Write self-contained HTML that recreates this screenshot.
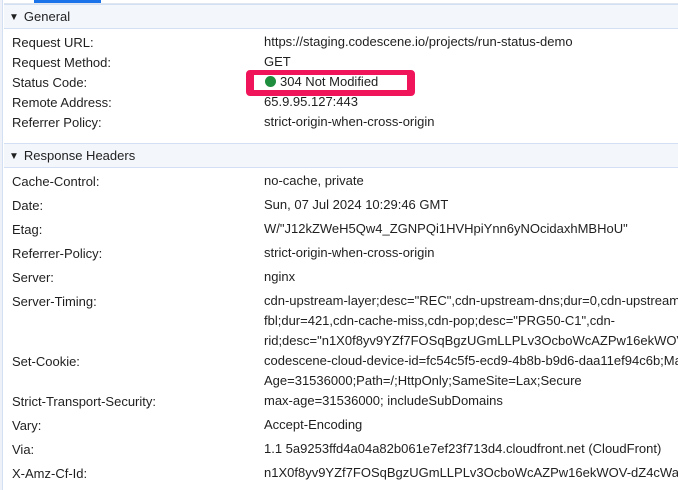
<!DOCTYPE html>
<html><head><meta charset="utf-8"><style>
*{margin:0;padding:0;box-sizing:border-box}
html,body{width:678px;height:490px;overflow:hidden;background:#fff;font-family:"Liberation Sans",sans-serif;font-size:13px;color:#1f1f1f}
#wrap{position:absolute;left:0;top:0;width:678px;height:490px;overflow:hidden}
.leftbar{position:absolute;left:0;top:0;width:3px;height:490px;background:#eef2f8;border-right:1px solid #d3e0f3}
.tab{position:absolute;left:34px;top:0;width:67px;height:3px;background:#1a73e8}
.topline{position:absolute;left:4px;top:3px;right:0;height:1px;background:#dfe6f0}
.hdr{position:absolute;left:4px;right:0;height:25px;background:#f3f6fb;border-top:1px solid #d3e0f3;border-bottom:1px solid #d3e0f3;line-height:23px;padding-left:5px;font-size:13px;color:#1f1f1f}
.hdr span{font-size:10px;margin-right:5px;position:relative;top:-1px}
.k{position:absolute;left:12px;white-space:nowrap}
.v{position:absolute;left:264px;white-space:nowrap;line-height:20px;width:414px;overflow:hidden}
.box{position:absolute;left:246px;top:70px;width:169px;height:26px;border:solid #f0155a;border-width:5px 8px 6px 8px;border-radius:4px;background:#fff}
.dot{position:absolute;left:265px;top:76px;width:11px;height:11px;border-radius:50%;background:#1e8e3e}
</style></head><body><div id="wrap">
<div class="leftbar"></div>
<div class="topline"></div>
<div class="tab"></div>
<div class="hdr" style="top:4px"><span>▼</span>General</div>
<div class="k" style="top:35px">Request URL:</div><div class="v" style="top:32px">https://staging.codescene.io/projects/run-status-demo</div>
<div class="k" style="top:55px">Request Method:</div><div class="v" style="top:52px">GET</div>
<div class="box"></div><div class="dot"></div>
<div class="k" style="top:75px">Status Code:</div><div class="v" style="top:72px;left:280px;width:130px">304 Not Modified</div>
<div class="k" style="top:95px">Remote Address:</div><div class="v" style="top:92px">65.9.95.127:443</div>
<div class="k" style="top:115px">Referrer Policy:</div><div class="v" style="top:112px">strict-origin-when-cross-origin</div>
<div class="hdr" style="top:143px"><span>▼</span>Response Headers</div>
<div class="k" style="top:174px">Cache-Control:</div><div class="v" style="top:171px">no-cache, private</div>
<div class="k" style="top:198px">Date:</div><div class="v" style="top:195px">Sun, 07 Jul 2024 10:29:46 GMT</div>
<div class="k" style="top:222px">Etag:</div><div class="v" style="top:219px">W/"J12kZWeH5Qw4_ZGNPQi1HVHpiYnn6yNOcidaxhMBHoU"</div>
<div class="k" style="top:246px">Referrer-Policy:</div><div class="v" style="top:243px">strict-origin-when-cross-origin</div>
<div class="k" style="top:270px">Server:</div><div class="v" style="top:267px">nginx</div>
<div class="k" style="top:294px">Server-Timing:</div><div class="v" style="top:291px">cdn-upstream-layer;desc="REC",cdn-upstream-dns;dur=0,cdn-upstream-connect<br>fbl;dur=421,cdn-cache-miss,cdn-pop;desc="PRG50-C1",cdn-<br>rid;desc="n1X0f8yv9YZf7FOSqBgzUGmLLPLv3OcboWcAZPw16ekWOV-dZ4cWag=="</div>
<div class="k" style="top:354px">Set-Cookie:</div><div class="v" style="top:351px">codescene-cloud-device-id=fc54c5f5-ecd9-4b8b-b9d6-daa11ef94c6b;Max-<br>Age=31536000;Path=/;HttpOnly;SameSite=Lax;Secure</div>
<div class="k" style="top:394px">Strict-Transport-Security:</div><div class="v" style="top:391px">max-age=31536000; includeSubDomains</div>
<div class="k" style="top:418px">Vary:</div><div class="v" style="top:415px">Accept-Encoding</div>
<div class="k" style="top:442px">Via:</div><div class="v" style="top:439px">1.1 5a9253ffd4a04a82b061e7ef23f713d4.cloudfront.net (CloudFront)</div>
<div class="k" style="top:466px">X-Amz-Cf-Id:</div><div class="v" style="top:463px">n1X0f8yv9YZf7FOSqBgzUGmLLPLv3OcboWcAZPw16ekWOV-dZ4cWag==</div>
</div></body></html>
